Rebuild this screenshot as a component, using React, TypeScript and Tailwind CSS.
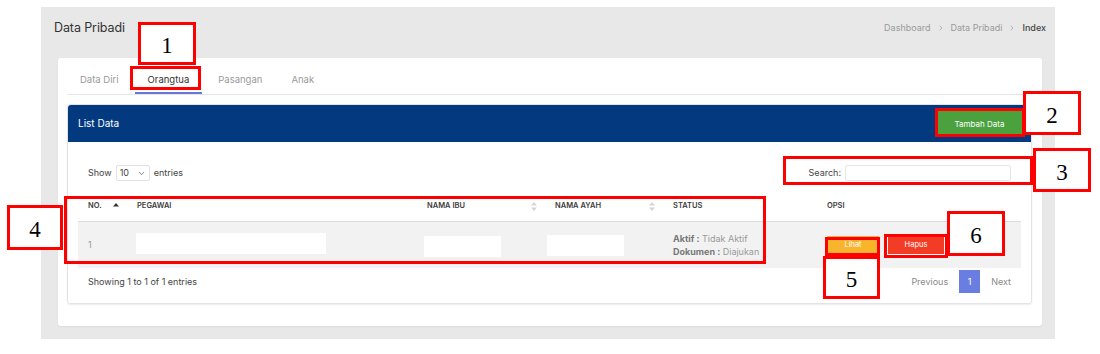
import { ChevronDown, ChevronRight } from "lucide-react";

// kotak anotasi merah di atas screenshot
const Mark = ({ className, label }: { className: string; label?: string }) => (
  <div
    className={`absolute border-[3px] border-[#ff0000] flex items-center justify-center pt-[4px] font-['Liberation_Serif',serif] text-[23px] text-black leading-none ${label ? "bg-white" : ""} ${className}`}
  >
    {label}
  </div>
);

const SortBoth = () => (
  <svg width="6" height="9" viewBox="0 0 6 9" className="fill-[#d4d4d4]">
    <path d="M3 0 L6 3.5 H0 Z" />
    <path d="M0 5.5 H6 L3 9 Z" />
  </svg>
);

const SortUp = () => (
  <svg width="6" height="9" viewBox="0 0 6 9" className="fill-[#333]">
    <path d="M3 1 L6 4.5 H0 Z" />
  </svg>
);

const tabs = ["Data Diri", "Orangtua", "Pasangan", "Anak"];

export default function App() {
  return (
    <div className="relative w-[1100px] h-[354px] bg-white overflow-hidden font-['Inter',sans-serif] pt-[7px]">
      <div className="ml-[41px] w-[1014px] h-[332px] bg-[#e8e8e8]">
        {/* judul + breadcrumb */}
        <div className="h-[42px] flex items-center justify-between pl-[13px] pr-[9px]">
          <h1 className="text-[12.5px] text-[#333] tracking-[-0.1px]">Data Pribadi</h1>
          <div className="flex items-center gap-[6px] text-[9px] text-[#9a9a9a]">
            <span>Dashboard</span>
            <ChevronRight size={8} strokeWidth={2} />
            <span>Data Pribadi</span>
            <ChevronRight size={8} strokeWidth={2} />
            <span className="text-[#444] font-medium">Index</span>
          </div>
        </div>

        <div className="mt-[9px] ml-[17px] w-[984px] h-[268px] bg-white rounded-[3px] shadow-[0_1px_2px_rgba(0,0,0,0.06)] px-[9px] pt-[8px]">
          {/* tab */}
          <div className="flex gap-[3px] border-b border-[#e6e6e6]">
            {tabs.map((t) => (
              <div
                key={t}
                className={`h-[28px] px-[13px] flex items-center text-[9.5px] ${
                  t === "Orangtua" ? "text-[#333] border-b-2 border-[#6577d8] pt-[2px]" : "text-[#9a9a9a]"
                }`}
              >
                {t}
              </div>
            ))}
          </div>

          {/* panel list data */}
          <div className="mt-[9px] w-[965px] rounded-[3px] border border-[#e4e4e4] shadow-[0_1px_2px_rgba(0,0,0,0.08)]">
            <div className="h-[37px] bg-[#033a7f] rounded-t-[3px] flex items-center justify-between pl-[10px] pr-[9px]">
              <span className="text-[10px] text-white">List Data</span>
              <button className="h-[25px] w-[85px] bg-[#4aa13e] text-white text-[8px]">Tambah Data</button>
            </div>

            <div className="px-[10px]">
              <div className="pt-[23px] px-[10px] flex items-center justify-between text-[9px] text-[#444]">
                <div className="flex items-center gap-[4px]">
                  <span>Show</span>
                  <div className="w-[34px] h-[16px] border border-[#e2e2e2] rounded-[2px] flex items-center justify-between pl-[3px] pr-[3px]">
                    <span>10</span>
                    <ChevronDown size={9} strokeWidth={2} className="text-[#555]" />
                  </div>
                  <span>entries</span>
                </div>
                <div className="flex items-center gap-[4px]">
                  <span>Search:</span>
                  <div className="w-[166px] h-[16px] border border-[#e6e6e6] rounded-[2px]" />
                </div>
              </div>

              {/* tabel */}
              <div className="mt-[10px] grid grid-cols-[49px_290px_128px_118px_154px_1fr] h-[31px] items-center border-b border-[#dcdcdc] text-[7.5px] font-semibold text-[#3c3c3c]">
                <div className="pl-[10px] flex items-center justify-between pr-[8px]">
                  <span>NO.</span>
                  <SortUp />
                </div>
                <div className="pl-[10px]">PEGAWAI</div>
                <div className="pl-[10px] flex items-center justify-between pr-[8px]">
                  <span>NAMA IBU</span>
                  <SortBoth />
                </div>
                <div className="pl-[10px] flex items-center justify-between pr-[8px]">
                  <span>NAMA AYAH</span>
                  <SortBoth />
                </div>
                <div className="pl-[10px]">STATUS</div>
                <div className="pl-[10px]">OPSI</div>
              </div>

              <div className="grid grid-cols-[49px_290px_128px_118px_154px_1fr] h-[46px] items-center bg-[#f2f2f2] text-[9px]">
                <div className="pl-[10px] text-[#999]">1</div>
                <div className="pl-[9px]">
                  <div className="w-[190px] h-[21px] bg-white -mt-[3px]" />
                </div>
                <div className="pl-[7px]">
                  <div className="w-[77px] h-[21px] bg-white mt-[3px]" />
                </div>
                <div className="pl-[2px]">
                  <div className="w-[77px] h-[21px] bg-white mt-[1px]" />
                </div>
                <div className="pl-[10px] leading-[13px] text-[#9a9a9a] text-[9px]">
                  <div>
                    <b className="text-[#777]">Aktif :</b> Tidak Aktif
                  </div>
                  <div>
                    <b className="text-[#777]">Dokumen :</b> Diajukan
                  </div>
                </div>
                <div className="pl-[10px] flex items-center gap-[8px]">
                  <button className="w-[52px] h-[18px] bg-[#f7b42c] text-white text-[7.5px]">Lihat</button>
                  <button className="w-[58px] h-[19px] bg-[#f33c25] text-white text-[7.5px] border border-white">Hapus</button>
                </div>
              </div>

              {/* footer tabel */}
              <div className="h-[27px] px-[10px] mb-[8px] flex items-center justify-between text-[9px]">
                <span className="text-[#444]">Showing 1 to 1 of 1 entries</span>
                <div className="flex items-center gap-[11px] text-[#8a8a8a]">
                  <span>Previous</span>
                  <span className="w-[21px] h-[23px] bg-[#6a7de0] text-white flex items-center justify-center">1</span>
                  <span>Next</span>
                </div>
              </div>
            </div>
          </div>
        </div>
      </div>

      <Mark className="left-[138px] top-[22px] w-[58px] h-[43px]" label="1" />
      <Mark className="left-[130px] top-[66px] w-[71px] h-[24px]" />
      <Mark className="left-[1023px] top-[91px] w-[58px] h-[44px]" label="2" />
      <Mark className="left-[935px] top-[108px] w-[90px] h-[29px]" />
      <Mark className="left-[1033px] top-[148px] w-[58px] h-[44px]" label="3" />
      <Mark className="left-[783px] top-[156px] w-[250px] h-[29px]" />
      <Mark className="left-[7px] top-[205px] w-[56px] h-[45px]" label="4" />
      <Mark className="left-[64px] top-[196px] w-[702px] h-[68px]" />
      <Mark className="left-[823px] top-[256px] w-[57px] h-[43px]" label="5" />
      <Mark className="left-[825px] top-[237px] w-[55px] h-[19px]" />
      <Mark className="left-[947px] top-[211px] w-[58px] h-[45px]" label="6" />
      <Mark className="left-[884px] top-[234px] w-[64px] h-[24px]" />
    </div>
  );
}
